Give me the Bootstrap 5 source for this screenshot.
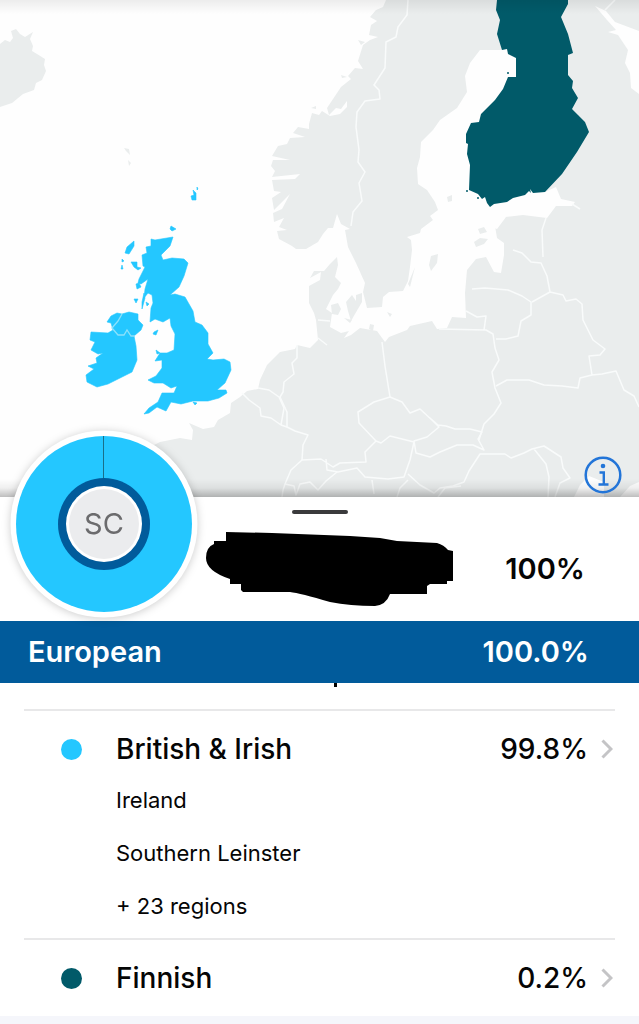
<!DOCTYPE html>
<html lang="en">
<head>
<meta charset="utf-8">
<meta name="viewport" content="width=device-width, initial-scale=1">
<title>Ancestry composition</title>
<link href="https://cdn.jsdelivr.net/npm/bootstrap@5.3.0/dist/css/bootstrap.min.css" rel="stylesheet">
<style>
  body { font-family: Inter, "Liberation Sans", sans-serif; background: #f5f6fb; color: #050505; }
  .map-view { background: #fefefe; }
  .map-view svg { width: 100%; height: auto; }
  .land { fill: #eaeded; }
  .water { fill: #fefefe; }
  .border-line { fill: none; stroke: #f9fbfb; stroke-width: 1.5; stroke-linejoin: round; }
  .british { fill: #24c7ff; stroke: #24c7ff; stroke-width: .6; stroke-linejoin: round; }
  .finnish { fill: #015a69; }
  .map-shade-top { height: 14px; background: linear-gradient(rgba(0,0,0,.07), transparent); }
  .map-shade-bottom { height: 18px; background: linear-gradient(transparent, rgba(0,0,0,.06) 50%, rgba(0,0,0,.25)); }
  .info-btn { right: 16px; bottom: 2px; width: 40px; height: 40px; }
  .info-btn svg { width: 40px; height: 40px; }
  .summary { min-height: 124px; padding: 20px 54px 0 206px; }
  .grab-handle { top: 13px; width: 56px; height: 4px; background: #3a3a3c; }
  .donut { left: 10px; top: -67px; width: 188px; height: 188px; filter: drop-shadow(0 1px 4px rgba(0,0,0,.2)); z-index: 2; }
  .heading-text { font-size: 29px; line-height: 36px; font-weight: 600; }
  .group-bar { background: #015b9b; min-height: 62px; padding: 0 50px 0 28px; }
  .scrolled-strip { height: 26px; }
  .scrolled-mark { left: 334px; top: 0; width: 3px; height: 4px; background: #000; }
  .region-item { margin: 0 24px; border-top: 2px solid #e8e8e9; }
  .region-head { height: 76px; padding-left: 37px; color: inherit; }
  .region-name { font-size: 28px; line-height: 36px; font-weight: 500; }
  .dot { width: 21px; height: 21px; margin-right: 34px; }
  .chevron { width: 12px; height: 20px; margin: 0 2px 0 13px; }
  .subregions { padding: 0 0 6px 92px; font-size: 22px; }
  .subregions li { height: 53px; line-height: 26px; }
  .subregions li:last-child { height: 39px; }
</style>
</head>
<body>
<main>
  <section class="map-view position-relative" aria-label="Map of regions">
    <svg class="d-block" viewBox="0 0 639 497" role="img" aria-label="Map of northern Europe">
      <!-- Scandinavia and the northern mainland -->
      <path class="land" d="M386 0L383 7L376 10L370 17L377 21L371 25L369 35L378 37L370 40L363 45L358 61L363 69L355 68L348 76L351 79L341 87L327 108L329 115L336 108L341 109L347 101L347 107L340 114L330 116L322 111L319 115L312 113L309 124L309 129L298 127L293 133L305 137L290 138L287 144L278 146L272 156L290 160L273 160L271 166L275 171L272 177L300 174L295 179L272 180L274 191L281 192L272 198L274 210L286 198L290 194L282 209L273 213L274 222L284 218L279 227L287 230L277 231L279 239L292 246L296 249L306 249L318 242L323 234L328 228L333 228L337 214L341 224L350 229L345 230L348 247L356 263L365 283L363 292L367 308L382 307L383 297L389 292L403 291L408 281L410 267L412 250L411 240L407 237L420 233L421 229L433 220L430 216L438 210L435 202L427 190L418 184L417 168L420 157L421 142L433 130L440 120L457 108L467 92L465 76L470 63L480 50L502 50L639 0Z"/>
      <!-- Continental Europe and Russia -->
      <path class="land" d="M560 0L639 0L639 497L150 497L150 447L160 442L180 438L192 440L193 430L189 423L203 429L214 427L218 420L230 413L231 403L240 397L247 391L258 389L260 380L267 365L280 352L295 349L297 345L310 348L318 340L316 320L314 313L309 303L309 286L320 280L321 272L310 278L314 271L324 271L330 264L337 257L338 265L335 277L341 283L338 289L333 295L326 309L332 313L330 327L341 333L349 331L344 338L351 335L360 328L377 331L385 342L389 337L407 330L410 326L432 321L437 329L447 328L452 317L466 318L465 293L467 270L476 259L486 257L494 272L501 273L504 255L504 243L497 238L495 226L505 217L523 215L547 218L556 206L572 206L575 202L561 199L556 187L545 192L520 170L530 20Z"/>
      <path class="water" d="M595 6L606 11L615 22L639 31V94L631 88L630 73L625 63L628 50L618 35L608 32L616 30L607 20Z"/>
      <path class="water" d="M574 497L580 485L589 476L604 482L604 497ZM639 482L630 486L620 497H639ZM506 217L504 215L494 219L494 228L497 229Z"/>
      <!-- Islands -->
      <path class="land" d="M0 44L5 40L10 42L13 38L11 31L16 29L20 34L25 37L33 32L30 39L33 46L32 51L37 54L45 59L44 65L46 71L42 80L36 83L34 90L23 94L12 103L0 107Z"/>
      <path class="land" d="M331 305L338 303L341 309L338 315L332 314ZM346 302L352 295L356 301L356 295L362 293L362 302L355 314L351 321L348 311ZM344 318L352 320L350 323ZM370 324L374 325L373 331L369 329ZM387 312L392 314L390 317ZM429 265L431 256L438 254L437 263L431 271ZM415 267L408 284L410 287ZM474 242L480 238L488 239L484 244L476 247ZM478 229L484 227L487 232L480 234ZM447 197L452 195L452 201L448 202ZM311 108L316 106L316 109ZM358 40L365 42L361 45ZM341 75L347 77L342 78ZM124 148L129 149L130 155L126 151ZM128 160L131 163L129 166Z"/>
      <!-- Country borders -->
      <g class="border-line">
        <path d="M408 0L407 15L398 27L396 37L386 42L385 68L374 85L379 90L380 99L365 101L357 112L356 127L359 150L358 162L365 172L359 183L362 201L353 212L351 226"/>
        <path d="M318 320L330 321M318 338L327 345M297 345L297 358L292 363L294 374L284 382L283 392L280 397L287 412L287 427L295 431L308 435L303 445L302 460"/>
        <path d="M258 388L269 390L279 397L284 408L281 425L271 418L261 416L260 408L249 400L242 393M281 425L287 427"/>
        <path d="M382 342L385 366L390 397L374 402L358 412L359 423L376 441L365 452L366 462L340 463L333 467L321 459L302 460L291 470L285 484L283 490M326 459L327 470L338 472L357 468L365 477L388 479L404 477L410 460L414 442L390 436L381 443L376 441"/>
        <path d="M390 397L402 402L410 413L420 409L433 421L439 427L427 437L414 441L416 453L430 457L440 452L457 445L473 445L484 450L478 439L482 432L470 429L455 429L446 426L438 425L430 418M285 484L294 486L296 495L300 484L310 482L318 490L326 481L337 472"/>
        <path d="M408 474L420 485L434 493L440 488L453 486L464 482L469 471L480 454L505 454L511 458L524 453L532 449L544 446L561 457L563 468L570 478L560 483L555 497M534 449L546 464L549 477L548 497"/>
        <path d="M439 329L486 330L493 334L495 348L499 360L492 372L495 388L501 403L494 414L484 424L479 440M466 311L477 317L486 316L484 330M472 289L485 288L508 290L522 296L531 302L531 315L521 321L518 336L506 339L496 339"/>
        <path d="M513 250L522 253L531 262L541 263L547 276L550 292L532 302M546 218L542 230L543 257M550 292L563 295L566 301L576 299L582 304L583 320L593 340L605 349L600 355L589 356L592 375L580 378L578 388L562 386L544 385L529 380L507 380L496 386M592 375L602 374L616 371L624 390L634 396L639 407"/>
        <path d="M372 480L374 494M397 497L400 488L408 480M438 497L445 488L461 486M572 204L580 209M283 490L282 497M615 0L605 10"/>
      </g>
      <!-- Finland -->
      <path class="finnish" d="M497 0L496 10L500 20L497 34L502 50L507 49L508 54L516 58L516 77L508 77L503 89L495 100L481 114L479 122L471 123L466 134L466 143L468 144L467 154L470 165L469 190L478 194L482 199L485 197L487 203L490 207L494 204L507 202L513 198L525 195L529 191L531 193L530 189L533 193L545 192L562 174L577 152L589 132L585 122L578 115L572 109L578 98L572 88L573 81L568 75L568 55L573 53L568 34L561 17L568 4V0Z"/>
      <g class="finnish"><circle cx="508" cy="73" r="1"/><circle cx="467" cy="191" r="1"/><circle cx="478" cy="198" r="1"/></g>
      <!-- Great Britain -->
      <path class="british" d="M151 239L151 246L146 247L147 253L142 255L143 266L145 267L139 279L138 283L141 284L148 279L145 289L144 298L148 293L152 295L153 303L151 308L150 322L155 319L163 322L170 318L171 326L175 334L174 350L167 353L160 353L155 361L162 360L162 368L156 376L148 380L154 383L163 383L171 388L177 386L174 393L162 393L158 402L149 408L144 414L149 413L157 407L166 411L171 402L181 404L193 401L208 401L219 398L227 393L226 390L217 390L225 383L231 370L230 362L224 359L213 360L207 359L213 353L208 344L208 333L202 325L195 322L193 311L185 297L175 294L170 295L179 287L184 276L188 263L184 259L172 258L163 260L161 255L170 246L173 237L155 240Z"/>
      <!-- Ireland -->
      <path class="british" d="M117 313L111 316L107 322L111 323L113 330L108 333L91 332L90 340L95 342L91 350L98 354L103 353L96 358L97 363L88 366L94 369L86 375L87 382L97 387L108 384L122 377L132 372L137 360L136 346L134 336L141 330L143 325L138 320L138 314L129 312L122 314Z"/>
      <path fill="none" stroke="#8ce1fb" stroke-width="1.3" d="M122 314L118 321L112 328L118 335L124 335L127 330L131 336L135 336"/>
      <!-- Hebrides, Orkney, Shetland, Man, Anglesey and Wight -->
      <path class="british" d="M134 241L134 246L129 254L125 253L127 247ZM122 259L124 261L122 262ZM122 265L123 269L121 269ZM131 262L137 262L137 267L141 268L138 270L134 267ZM136 284L139 283L141 287L137 289ZM134 299L138 299L136 303ZM144 293L145 298L142 309L142 302ZM146 302L149 304L147 306ZM154 332L158 330L156 335L153 334ZM156 350L160 353L157 354ZM193 402L197 403L195 405ZM171 226L176 229L172 231L170 229ZM193 190L196 193L196 200L192 200L191 196L194 195ZM197 187L198 189L197 190Z"/>
    </svg>
    <div class="map-shade-top position-absolute top-0 start-0 w-100"></div>
    <div class="map-shade-bottom position-absolute bottom-0 start-0 w-100"></div>
    <button type="button" class="info-btn btn p-0 border-0 position-absolute" aria-label="Map information">
      <svg class="d-block" viewBox="0 0 40 40" fill="none" stroke="#2375d8" aria-hidden="true">
        <circle cx="20" cy="20" r="17.3" stroke-width="2.5"/>
        <circle cx="20" cy="11" r="2.3" fill="#2375d8" stroke="none"/>
        <path d="M16.5 17.5H20.8V29M15.5 29.5H25.5" stroke-width="2.4"/>
      </svg>
    </button>
  </section>

  <section class="summary position-relative bg-white d-flex align-items-center justify-content-between">
    <svg class="donut position-absolute" viewBox="0 0 188 188" role="img" aria-label="99.8% British and Irish, 0.2% Finnish">
      <circle cx="94" cy="94" r="93.5" fill="#fff"/>
      <circle cx="94" cy="94" r="88" fill="#24c7ff"/>
      <path d="M93.5 6V50" stroke="#1a6f88" stroke-width="1"/>
      <circle cx="94" cy="94" r="46" fill="#015b9b"/>
      <circle cx="94" cy="94" r="38" fill="#fff"/>
      <circle cx="94" cy="94" r="35" fill="#ebecee"/>
      <text x="94" y="104" text-anchor="middle" font-size="29" fill="#6b6b6d">SC</text>
    </svg>
    <span class="grab-handle position-absolute start-50 translate-middle-x rounded-pill"></span>
    <svg width="248" height="76" viewBox="206 532 248 76" aria-label="Name hidden" role="img">
      <path d="M226 533L272 534L350 537L380 539L397 542L437 544Q444 546 448 551L453 552V582H447V585H430L427 587V595H390Q386 606 375 607Q350 607 330 603Q300 594 290 593H243L241 591V585H230V580Q206 572 206 559Q206 548 214 545V542H226Z"/>
    </svg>
    <span class="heading-text">100%</span>
  </section>

  <section class="group-bar d-flex align-items-center justify-content-between text-white">
    <h1 class="heading-text m-0">European</h1>
    <span class="heading-text">100.0%</span>
  </section>

  <section class="bg-white">
    <div class="scrolled-strip position-relative"><span class="scrolled-mark position-absolute"></span></div>
    <article class="region-item">
      <a href="#british-irish" class="region-head d-flex align-items-center text-decoration-none">
        <span class="dot rounded-circle" style="background:#24c7ff"></span>
        <span class="region-name flex-grow-1">British &amp; Irish</span>
        <span class="region-name">99.8%</span>
        <svg class="chevron" viewBox="0 0 12 20" fill="none" stroke="#c4c4c6" stroke-width="3" aria-hidden="true"><path d="M1.5 1.5L10 10L1.5 18.5"/></svg>
      </a>
      <ul class="subregions list-unstyled m-0">
        <li>Ireland</li>
        <li>Southern Leinster</li>
        <li>+ 23 regions</li>
      </ul>
    </article>
    <article class="region-item">
      <a href="#finnish" class="region-head d-flex align-items-center text-decoration-none">
        <span class="dot rounded-circle" style="background:#015a69"></span>
        <span class="region-name flex-grow-1">Finnish</span>
        <span class="region-name">0.2%</span>
        <svg class="chevron" viewBox="0 0 12 20" fill="none" stroke="#c4c4c6" stroke-width="3" aria-hidden="true"><path d="M1.5 1.5L10 10L1.5 18.5"/></svg>
      </a>
    </article>
  </section>
</main>
<script src="https://cdn.jsdelivr.net/npm/bootstrap@5.3.0/dist/js/bootstrap.bundle.min.js"></script>
</body>
</html>
